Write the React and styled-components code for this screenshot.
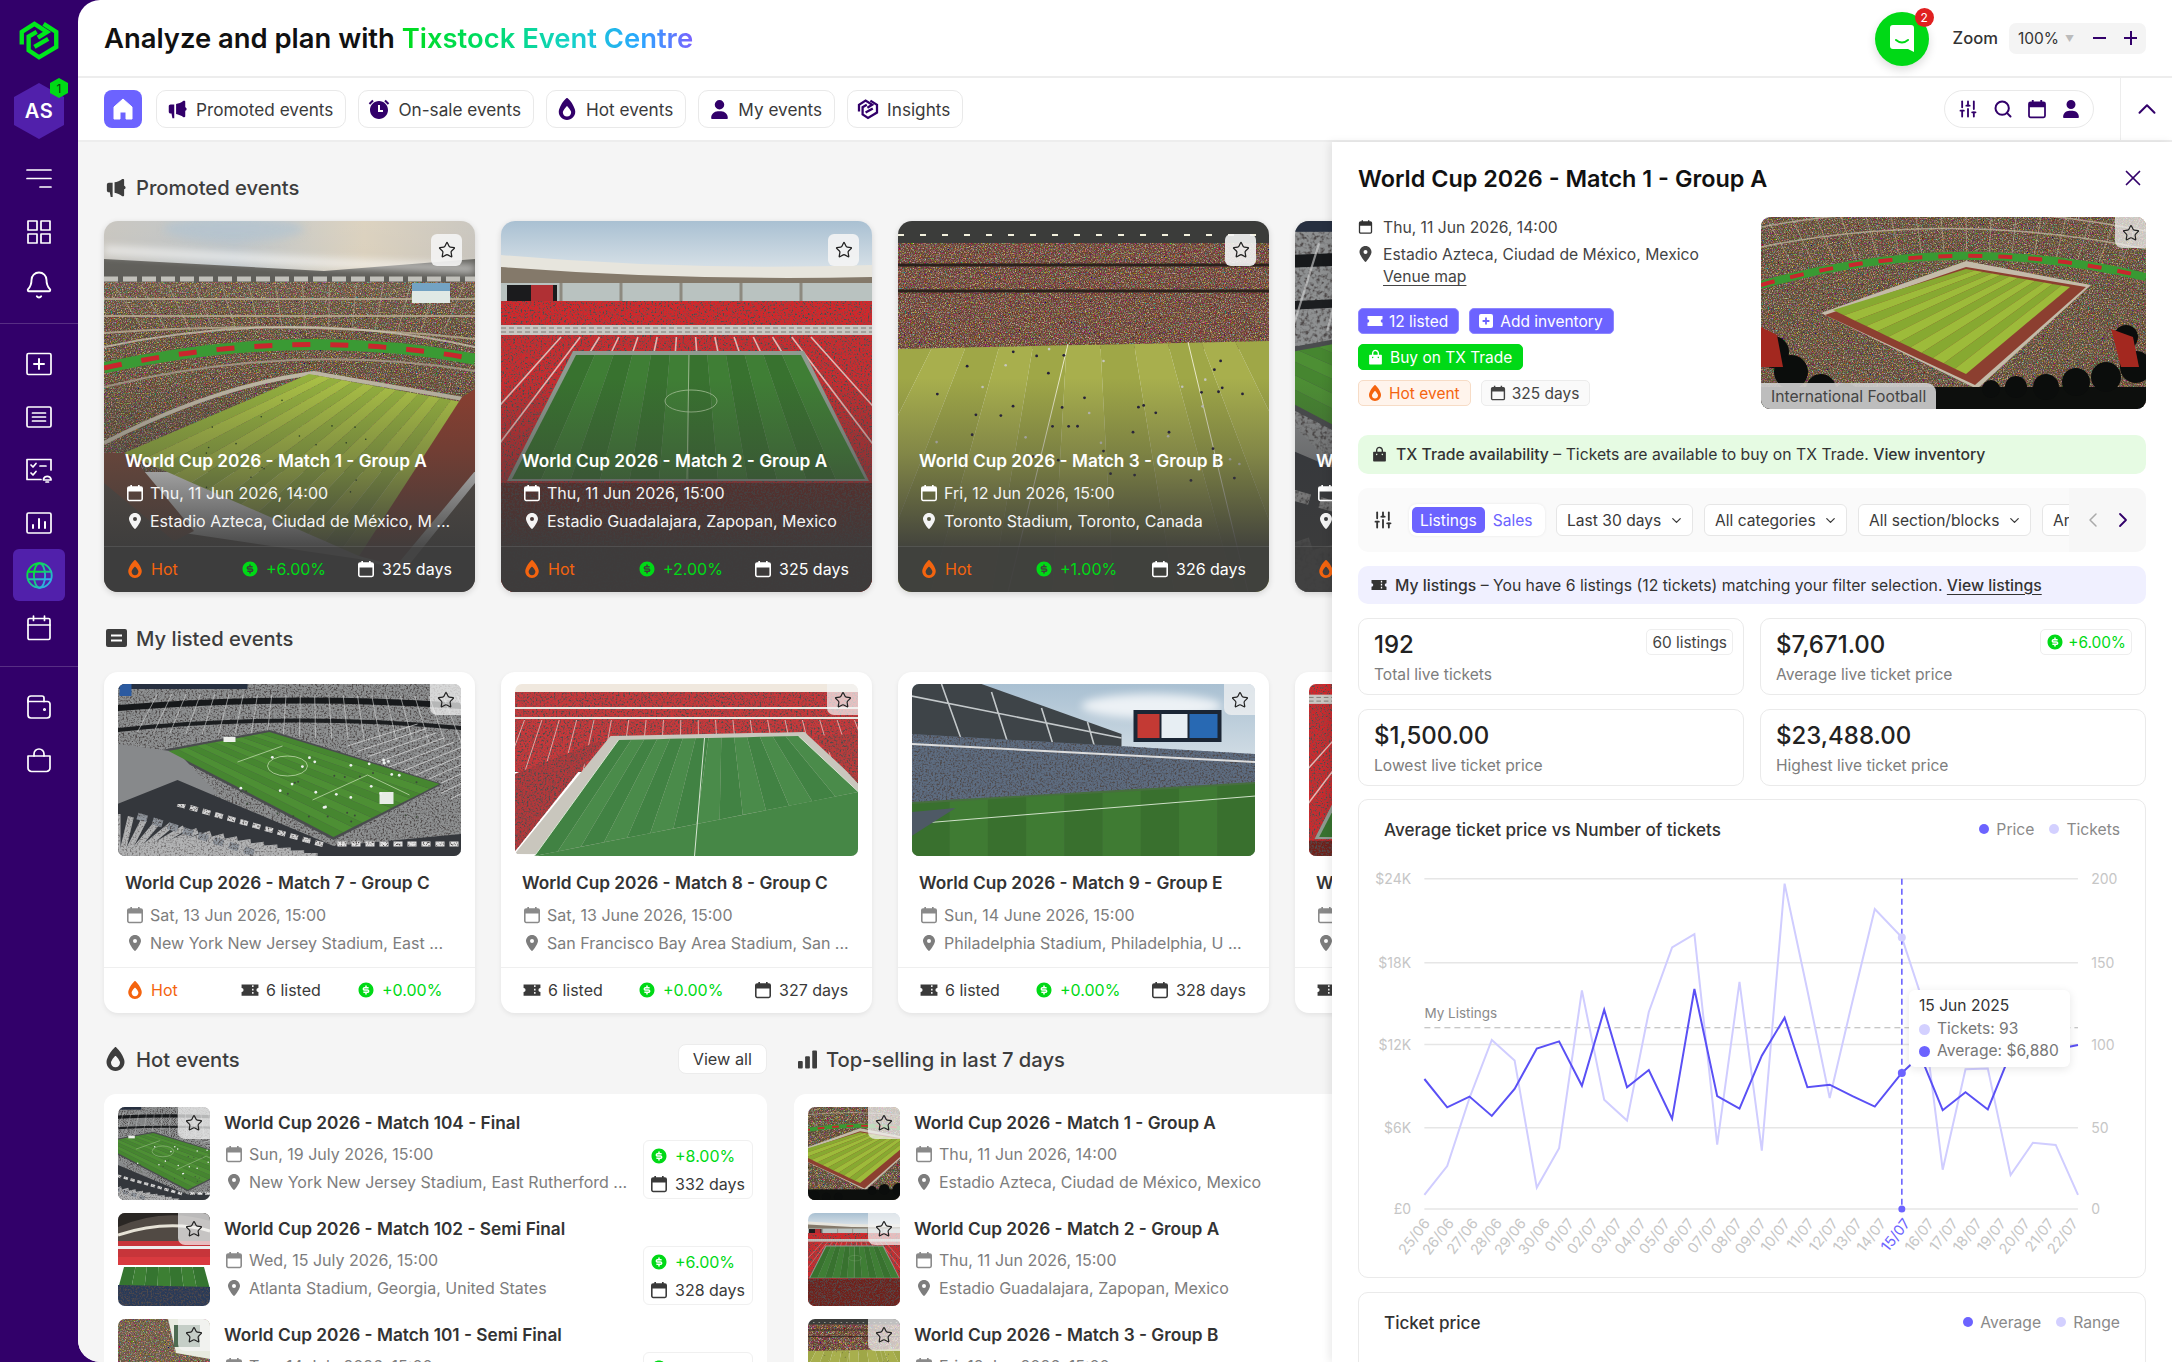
import React from "react";
import styled, { createGlobalStyle } from "styled-components";
import { Star, X, ChevronUp, ChevronDown, ChevronLeft, ChevronRight, Search, SlidersVertical, Bell } from "lucide-react";
import { FaFireFlameSimple, FaLocationDot, FaUser } from "react-icons/fa6";
import { RiMegaphoneFill, RiAlarmFill, RiMoneyDollarCircleFill, RiShoppingBagFill } from "react-icons/ri";

const GlobalStyle = createGlobalStyle`
  html, body { margin: 0; padding: 0; height: 100%; }
  body { font-family: "Inter", "Noto Sans", sans-serif; color: #333; overflow: hidden; }
  * { box-sizing: border-box; }
`;

const PURPLE = "#32006a";
const INDIGO = "#6c63ff";
const GREEN = "#00d916";
const ORANGE = "#f4640f";

/* ---------- little drawn icons ---------- */

const Logo = ({ size = 46, color = "#00e81c" }) => (
  <svg width={size} height={size} viewBox="0 0 40 40" fill="none" stroke={color} strokeWidth="3.8" strokeLinejoin="miter">
    <path d="M5 24V13L16 6l11 7-8 5" />
    <path d="M24 6l11 7v13L20 35l-9-6V17l7-4" />
    <path d="M16 26l12-7" />
  </svg>
);

const Cal = ({ size = 18, color = "currentColor" }) => (
  <svg width={size} height={size} viewBox="0 0 16 16" fill="none">
    <rect x="1.6" y="2.6" width="12.8" height="12" rx="1.2" stroke={color} strokeWidth="1.4" />
    <path d="M1.6 3.6a1 1 0 0 1 1-1h10.8a1 1 0 0 1 1 1v3H1.6z" fill={color} />
    <path d="M4.6 .8v2.6M11.4 .8v2.6" stroke={color} strokeWidth="1.5" />
  </svg>
);

const Ticket = ({ size = 18, color = "currentColor" }) => (
  <svg width={size} height={size} viewBox="0 0 16 16">
    <path d="M.5 3h15v3.2a1.8 1.8 0 0 0 0 3.6V13H.5V9.8a1.8 1.8 0 0 0 0-3.6z" fill={color} />
    <path d="M10.5 3.8v8.4" stroke="#fff" strokeWidth="1.3" strokeDasharray="1.6 1.4" />
  </svg>
);

const PlusSquare = ({ size = 16, color = "#fff", mark = INDIGO }) => (
  <svg width={size} height={size} viewBox="0 0 16 16">
    <rect x="1" y="1" width="14" height="14" rx="2" fill={color} />
    <path d="M8 4.6v6.8M4.6 8h6.8" stroke={mark} strokeWidth="1.8" />
  </svg>
);

const Flame = ({ size = 18, color = ORANGE }) => <FaFireFlameSimple size={size} color={color} />;
const Pin = ({ size = 16, color = "currentColor" }) => <FaLocationDot size={size} color={color} />;
const Dollar = ({ size = 18 }) => <RiMoneyDollarCircleFill size={size} color={GREEN} />;

const Line = ({ size = 26, children }) => (
  <svg width={size} height={size} viewBox="0 0 26 26" fill="none" stroke="#fff" strokeWidth="1.7" strokeLinecap="round" strokeLinejoin="round">
    {children}
  </svg>
);

const GlobeIcon = () => (
  <svg width="27" height="27" viewBox="0 0 26 26" fill="none" stroke="url(#globeGrad)" strokeWidth="1.8">
    <circle cx="13" cy="13" r="11.8" />
    <ellipse cx="13" cy="13" rx="5.4" ry="11.8" />
    <path d="M2 9.4h22M2 16.6h22" />
  </svg>
);

/* ---------- stadium pictures, drawn with svg ---------- */

const mix = (p, q, t) => [p[0] + (q[0] - p[0]) * t, p[1] + (q[1] - p[1]) * t];

const Pitch = ({ c, n = 12, a, b }) => {
  const [tl, tr, br, bl] = c;
  return (
    <g>
      {Array.from({ length: n }, (_, i) => {
        const p = [mix(tl, tr, i / n), mix(tl, tr, (i + 1) / n), mix(bl, br, (i + 1) / n), mix(bl, br, i / n)];
        return <polygon key={i} points={p.map((v) => v.join(",")).join(" ")} fill={i % 2 ? a : b} />;
      })}
    </g>
  );
};

const Dots = ({ x, y, w, h, n = 24, fill = "#26401d", r = 0.8, seed = 3 }) => {
  let s = seed * 97;
  const rnd = () => {
    s = (s * 9301 + 49297) % 233280;
    return s / 233280;
  };
  return (
    <g fill={fill}>
      {Array.from({ length: n }, (_, i) => (
        <circle key={i} cx={x + rnd() * w} cy={y + rnd() * h} r={r} />
      ))}
    </g>
  );
};

const Rays = ({ from, to, n, stroke = "#c9c4b6", width = 1, opacity = 0.7 }) => (
  <g stroke={stroke} strokeWidth={width} opacity={opacity}>
    {Array.from({ length: n }, (_, i) => {
      const t = i / (n - 1);
      const p = mix(from[0], from[1], t);
      const q = mix(to[0], to[1], t);
      return <line key={i} x1={p[0]} y1={p[1]} x2={q[0]} y2={q[1]} />;
    })}
  </g>
);

const Heads = ({ items }) => (
  <g fill="#0b0d0c">
    {items.map(([x, y, r], i) => (
      <circle key={i} cx={x} cy={y} r={r} />
    ))}
  </g>
);

const scenes = {
  azteca: {
    box: "0 0 371 371",
    art: (
      <>
        <rect width="371" height="60" fill="url(#skyWarm)" />
        <ellipse cx="130" cy="8" rx="70" ry="12" fill="#a8bccb" opacity=".7" filter="url(#soft)" />
        <path d="M0 38L220 50 371 38V70H0z" fill="#55544f" />
        <path d="M0 29L230 42 371 48" stroke="#fff" strokeWidth="7" opacity=".75" filter="url(#soft)" fill="none" />
        <path d="M0 58h371" stroke="#bdbcb6" strokeWidth="5" strokeDasharray="14 5" />
        <g filter="url(#crowdColor)">
          <rect y="61" width="371" height="190" fill="#5f4c39" />
        </g>
        <path d="M0 78h371M0 95h371M0 112Q190 98 371 118" stroke="#b5a88f" strokeWidth="2" fill="none" opacity=".85" />
        <path d="M0 126Q190 86 371 126" stroke="#cfc9b8" strokeWidth="2" fill="none" opacity=".7" />
        <Rays from={[[10, 64], [360, 64]]} to={[[40, 110], [340, 110]]} n={14} stroke="#bcb09a" opacity=".55" />
        <path d="M0 147Q190 105 371 138" stroke="#3a9a34" strokeWidth="11" fill="none" />
        <path d="M0 147Q190 105 371 138" stroke="#c9262d" strokeWidth="5" fill="none" strokeDasharray="18 20" />
        <path d="M0 166Q190 120 371 150" stroke="#a79e8e" strokeWidth="2" fill="none" opacity=".8" />
        <path d="M0 222Q110 165 210 152L371 180" stroke="#bdb6a4" strokeWidth="4" fill="none" />
        <polygon points="0,236 0,236 80,312 255,338 300,350 371,262 371,371 0,371" fill="#5b5048" />
        <polygon points="0,232 25,232 90,310 70,320 0,262" fill="#7b4a3a" />
        <Pitch c={[[205, 153], [358, 181], [255, 335], [20, 232]]} n={14} a="#a9bf45" b="#94b03e" />
        <Dots x={100} y={175} w={180} h={100} n={22} />
        <polygon points="358,176 371,168 371,250 292,345 255,335" fill="#8c3f30" />
        <rect x="308" y="62" width="38" height="20" fill="#dfe8e4" />
        <rect x="308" y="62" width="38" height="8" fill="#6c9ec0" />
        <rect x="0" y="0" width="371" height="371" fill="url(#haze)" />
      </>
    ),
  },
  aztecaWide: {
    box: "0 0 385 192",
    art: (
      <>
        <g filter="url(#crowdColor)">
          <rect width="385" height="192" fill="#5f4b38" />
        </g>
        <path d="M0 10Q190 -25 385 14M0 30Q190 -8 385 32" stroke="#c6bca6" strokeWidth="1.6" fill="none" opacity=".7" />
        <Rays from={[[5, 0], [380, 0]]} to={[[30, 45], [360, 45]]} n={16} stroke="#c6bca6" opacity=".5" />
        <path d="M0 68Q190 14 385 60" stroke="#399a33" strokeWidth="8" fill="none" />
        <path d="M0 68Q190 14 385 60" stroke="#c9262d" strokeWidth="4" fill="none" strokeDasharray="14 16" />
        <polygon points="60,96 205,44 330,68 216,172" fill="#c4bba9" />
        <polygon points="64,98 205,50 325,70 214,168" fill="#8c3f30" />
        <Pitch c={[[205, 52], [309, 70], [205, 157], [72, 93]]} n={12} a="#9dbb3a" b="#87a931" />
        <rect y="170" width="385" height="22" fill="#0d0f0d" />
        <Heads
          items={[
            [12, 135, 16], [30, 155, 17], [60, 172, 15], [85, 178, 12], [110, 184, 11], [135, 186, 9], [160, 186, 9],
            [230, 172, 9], [255, 170, 11], [285, 170, 13], [315, 165, 14], [345, 160, 15], [375, 150, 16], [365, 120, 12],
          ]}
        />
        <polygon points="0,110 16,118 22,150 0,150" fill="#a3281f" />
        <polygon points="350,112 372,120 378,150 360,150" fill="#a3281f" />
      </>
    ),
  },
  guadalajara: {
    box: "0 0 371 371",
    art: (
      <>
        <rect width="371" height="50" fill="url(#skyBlue)" />
        <path d="M0 34Q180 50 371 44V62H0z" fill="#e7e5dd" />
        <path d="M0 46Q180 60 371 56V72H0z" fill="#84796a" />
        <rect y="62" width="371" height="30" fill="#b9c2c0" />
        <rect x="6" y="64" width="50" height="18" fill="#1b1b1d" />
        <rect x="30" y="64" width="22" height="18" fill="#b03034" />
        <path d="M60 62v24M120 62v24M180 62v24M240 62v24M300 62v24" stroke="#8d8a80" strokeWidth="3" />
        <g filter="url(#crowd)">
          <rect y="80" width="371" height="26" fill="#d5252b" />
          <rect y="112" width="371" height="259" fill="#cc2a2e" />
        </g>
        <rect y="104" width="371" height="10" fill="#c9c8c3" />
        <path d="M0 107h371M0 111h371" stroke="#7e7b74" strokeWidth="1" strokeDasharray="5 3" />
        <Rays from={[[60, 116], [310, 116]]} to={[[-60, 250], [430, 250]]} n={14} stroke="#f0d8d2" width="1.6" opacity=".8" />
        <polygon points="72,130 303,130 368,260 6,260" fill="#8f9a90" />
        <Pitch c={[[75, 134], [300, 134], [364, 258], [11, 258]]} n={12} a="#3f7e35" b="#38722f" />
        <ellipse cx="190" cy="180" rx="26" ry="11" fill="none" stroke="#a9c69a" strokeWidth=".8" />
        <path d="M188 134L186 258M0 0" stroke="#a9c69a" strokeWidth=".8" />
        <g filter="url(#crowd)">
          <rect y="262" width="371" height="109" fill="#70201f" />
        </g>
      </>
    ),
  },
  toronto: {
    box: "0 0 371 371",
    art: (
      <>
        <rect width="371" height="24" fill="#3b3c3a" />
        <path d="M0 14h371" stroke="#f2f0dc" strokeWidth="2" strokeDasharray="6 16" />
        <g filter="url(#crowdColor)">
          <rect y="22" width="371" height="106" fill="#6a3f36" />
        </g>
        <path d="M0 44h371M0 70h371" stroke="#2a211c" strokeWidth="3" />
        <Pitch c={[[0, 128], [371, 120], [520, 371], [-150, 371]]} n={11} a="#a8af4d" b="#9fa747" />
        <path d="M170 123L110 371M290 121L350 371" stroke="#e9e8c8" strokeWidth="1" />
        <Dots x={30} y={130} w={320} h={130} n={34} fill="#241f3a" r={1.4} seed={11} />
        <Dots x={30} y={125} w={320} h={120} n={14} fill="#c7c7c0" r={1.3} seed={5} />
      </>
    ),
  },
  jersey: {
    box: "0 0 344 172",
    art: (
      <>
        <g filter="url(#crowd)">
          <rect width="344" height="172" fill="#8e9091" />
        </g>
        <rect width="130" height="5" fill="#273040" />
        <rect y="0" x="2" width="12" height="12" fill="#2b5aa0" />
        <path d="M0 24Q170 10 344 22" stroke="#17191b" strokeWidth="6" fill="none" />
        <path d="M0 46Q170 28 344 44" stroke="#1c1e20" strokeWidth="4" fill="none" />
        <Rays from={[[40, 10], [340, 12]]} to={[[20, 48], [360, 60]]} n={22} stroke="#d7d8d8" opacity=".6" />
        <Rays from={[[230, 62], [344, 120]]} to={[[300, 40], [400, 90]]} n={12} stroke="#e0e0e0" opacity=".7" />
        <polygon points="44,66 152,46 325,100 216,156" fill="#4a4c4e" />
        <polygon points="0,60 60,68 100,110 0,130" fill="#87898b" />
        <Pitch c={[[51, 67], [152, 48], [322, 100], [216, 153]]} n={11} a="#4d8f34" b="#468630" />
        <path d="M120 78l45-16M150 82a20 10 0 1 0 40 0a20 10 0 1 0 -40 0M195 116l55 -25 42 20" stroke="#bcd8a8" strokeWidth=".8" fill="none" />
        <rect x="262" y="108" width="14" height="12" fill="#e7ece6" />
        <rect x="106" y="53" width="12" height="5" fill="#eef1ec" />
        <Dots x={110} y={70} w={180} h={60} n={22} fill="#eef2f0" r={1.4} seed={6} />
        <Dots x={120} y={80} w={200} h={60} n={20} fill="#3c4a3a" r={1} seed={9} />
        <polygon points="0,120 60,96 216,162 344,150 344,172 0,172" fill="#34373c" />
        <g filter="url(#crowd)">
          <Rays from={[[0, 130], [200, 172]]} to={[[0, 172], [60, 172]]} n={16} stroke="#dcdddd" width="6" opacity=".75" />
          <path d="M220 160h124" stroke="#e5e5e5" strokeWidth="5" strokeDasharray="9 5" />
          <path d="M60 120l150 42" stroke="#d6d6d6" strokeWidth="5" strokeDasharray="8 5" />
          <path d="M20 132l120 38" stroke="#8e949c" strokeWidth="7" strokeDasharray="10 6" />
        </g>
      </>
    ),
  },
  sanfran: {
    box: "0 0 344 172",
    art: (
      <>
        <rect width="344" height="10" fill="#f0e8de" />
        <g filter="url(#crowd)">
          <rect y="8" width="344" height="80" fill="#c8393a" />
        </g>
        <path d="M0 24h344M0 34h344" stroke="#eae5de" strokeWidth="2" />
        <Rays from={[[10, 36], [340, 36]]} to={[[-10, 90], [360, 90]]} n={20} stroke="#eed9d2" opacity=".7" />
        <polygon points="0,170 96,52 290,48 344,98 344,172" fill="#c9c6bd" />
        <Pitch c={[[104, 56], [284, 52], [344, 108], [20, 172]]} n={14} a="#4a8b4a" b="#418243" />
        <polygon points="20,172 344,108 344,172" fill="#468746" />
        <path d="M190 54L180 172M104 56L20 172M284 52L344 108" stroke="#d7e6d2" strokeWidth="1" fill="none" />
        <g filter="url(#crowd)">
          <polygon points="0,90 90,55 0,168" fill="#b4373a" />
          <polygon points="300,52 344,50 344,100" fill="#b93a3b" />
        </g>
      </>
    ),
  },
  philly: {
    box: "0 0 344 172",
    art: (
      <>
        <rect width="344" height="90" fill="url(#skyBlue)" />
        <ellipse cx="240" cy="22" rx="70" ry="12" fill="#fff" opacity=".75" filter="url(#soft)" />
        <polygon points="0,0 70,0 210,50 210,72 0,62" fill="#3e4448" />
        <path d="M0 12L210 54M30 0l20 56M80 8l16 50M130 24l12 38M176 38l8 28" stroke="#c3c8ca" strokeWidth="1.6" />
        <g filter="url(#crowd)">
          <polygon points="0,50 344,70 344,112 0,130" fill="#5d6c80" />
        </g>
        <path d="M0 60L344 78" stroke="#ddd" strokeWidth="2" />
        <rect x="222" y="26" width="88" height="32" fill="#1b2635" />
        <rect x="226" y="30" width="22" height="24" fill="#c33a34" />
        <rect x="250" y="30" width="26" height="24" fill="#e7eef3" />
        <rect x="278" y="30" width="28" height="24" fill="#2869b3" />
        <polygon points="0,118 344,98 344,172 0,172" fill="#476f3e" />
        <Pitch c={[[0, 120], [344, 100], [344, 172], [0, 172]]} n={9} a="#3f7b33" b="#39702e" />
        <path d="M0 140L344 112" stroke="#cfe0c8" strokeWidth="1" />
        <polygon points="0,128 44,124 0,152" fill="#4e5965" />
      </>
    ),
  },
  atlanta: {
    box: "0 0 92 93",
    art: (
      <>
        <rect width="92" height="30" fill="#514a44" />
        <path d="M0 14Q46 -6 92 8V0H0z" fill="#2a2724" />
        <path d="M0 22Q50 6 92 18" stroke="#e6e2d6" strokeWidth="3" fill="none" />
        <rect y="28" width="92" height="16" fill="#c7353a" />
        <rect y="33" width="92" height="3" fill="#eee" />
        <rect y="44" width="92" height="8" fill="#d93a3f" />
        <Pitch c={[[6, 54], [86, 54], [92, 76], [0, 76]]} n={7} a="#3c7f33" b="#357530" />
        <g filter="url(#crowd)">
          <polygon points="0,72 92,74 92,93 0,93" fill="#293a58" />
        </g>
      </>
    ),
  },
  dallas: {
    box: "0 0 92 93",
    art: (
      <>
        <g filter="url(#crowdColor)">
          <rect width="92" height="60" fill="#6c5a44" />
        </g>
        <polygon points="50,0 92,0 92,40 58,34" fill="#e8ebe0" />
        <rect x="56" y="6" width="26" height="22" fill="#4e6b52" />
        <polygon points="0,60 92,46 92,93 0,93" fill="#3fa53f" />
      </>
    ),
  },
};

const PhotoSvg = styled.svg`
  display: block;
  width: 100%;
  height: 100%;
`;

const Photo = ({ scene }) => (
  <PhotoSvg viewBox={scenes[scene].box} preserveAspectRatio="xMidYMid slice">
    {scenes[scene].art}
  </PhotoSvg>
);

const Defs = styled.svg`
  position: absolute;
  width: 0;
  height: 0;
`;

const SharedDefs = () => (
  <Defs aria-hidden="true">
    <defs>
      <linearGradient id="globeGrad" x1="0" y1="0" x2="1" y2="1">
        <stop offset="0" stopColor="#00e81c" />
        <stop offset="1" stopColor="#34a8ff" />
      </linearGradient>
      <linearGradient id="skyWarm" x1="0" y1="0" x2="1" y2="0">
        <stop offset="0" stopColor="#c3c0b9" />
        <stop offset=".35" stopColor="#b9c0c4" />
        <stop offset=".7" stopColor="#d8cdb8" />
        <stop offset="1" stopColor="#c4c0b8" />
      </linearGradient>
      <linearGradient id="skyBlue" x1="0" y1="0" x2="0" y2="1">
        <stop offset="0" stopColor="#a9c0d2" />
        <stop offset="1" stopColor="#d9e2e8" />
      </linearGradient>
      <linearGradient id="haze" x1="0" y1="0" x2="0" y2="1">
        <stop offset="0" stopColor="#fff" stopOpacity=".12" />
        <stop offset=".3" stopColor="#fff" stopOpacity="0" />
      </linearGradient>
      <filter id="soft" x="-20%" y="-100%" width="140%" height="300%">
        <feGaussianBlur stdDeviation="4" />
      </filter>
      <filter id="crowd" x="0" y="0" width="100%" height="100%">
        <feTurbulence type="fractalNoise" baseFrequency=".55" numOctaves="2" seed="4" result="n" />
        <feColorMatrix in="n" type="matrix" values="0 0 0 0 .08  0 0 0 0 .07  0 0 0 0 .07  0 0 0 3.4 -1.5" result="d" />
        <feComposite in="d" in2="SourceAlpha" operator="in" result="e" />
        <feMerge>
          <feMergeNode in="SourceGraphic" />
          <feMergeNode in="e" />
        </feMerge>
      </filter>
      <filter id="crowdColor" x="0" y="0" width="100%" height="100%">
        <feTurbulence type="fractalNoise" baseFrequency=".8" numOctaves="2" seed="8" result="n" />
        <feColorMatrix in="n" type="matrix" values="1.5 0 0 0 -.42  0 1.2 0 0 -.36  0 0 .9 0 -.28  0 0 0 3 -1.2" result="d" />
        <feComposite in="d" in2="SourceAlpha" operator="in" result="e" />
        <feMerge>
          <feMergeNode in="SourceGraphic" />
          <feMergeNode in="e" />
        </feMerge>
      </filter>
    </defs>
  </Defs>
);

/* ---------- shell ---------- */

const Shell = styled.div`
  display: flex;
  width: 100%;
  height: 100vh;
  background: ${PURPLE};
  overflow: hidden;
`;

const Sidebar = styled.aside`
  width: 78px;
  flex: none;
  display: flex;
  flex-direction: column;
  align-items: center;
  padding-top: 17px;
`;

const Avatar = styled.div`
  position: relative;
  width: 52px;
  height: 58px;
  margin: 19px 0 12px;
  display: flex;
  align-items: center;
  justify-content: center;
  & > svg {
    position: absolute;
    inset: 0;
  }
`;

const AvatarText = styled.span`
  position: relative;
  color: #fff;
  font-size: 20px;
  font-weight: 600;
  letter-spacing: 0.5px;
`;

const AvatarBadge = styled.span`
  position: absolute;
  top: -4px;
  right: -3px;
  width: 18px;
  height: 20px;
  display: flex;
  align-items: center;
  justify-content: center;
  font-size: 12px;
  color: #133a10;
  background: ${GREEN};
  clip-path: polygon(50% 0, 100% 25%, 100% 75%, 50% 100%, 0 75%, 0 25%);
`;

const SideItem = styled.div`
  width: 52px;
  height: ${(p) => (p.$active ? "52px" : "53px")};
  flex: none;
  display: flex;
  align-items: center;
  justify-content: center;
  border-radius: 6px;
  background: ${(p) => (p.$active ? "#5120ab" : "transparent")};
`;

const SideRule = styled.div`
  width: 100%;
  height: 1px;
  flex: none;
  margin: 12px 0 13px;
  background: rgba(255, 255, 255, 0.18);
`;

const Main = styled.main`
  flex: 1;
  min-width: 0;
  display: flex;
  flex-direction: column;
  background: #fff;
  border-radius: 22px 0 0 22px;
  overflow: hidden;
`;

const Header = styled.header`
  height: 78px;
  flex: none;
  display: flex;
  align-items: center;
  padding: 0 26px;
  border-bottom: 2px solid #ededed;
`;

const Title = styled.h1`
  flex: 1;
  margin: 0;
  font-size: 27.4px;
  font-weight: 600;
  color: #111;
`;

const Gradient = styled.span`
  background: linear-gradient(90deg, #00dc1a 0%, #00dc6a 30%, #14d2c8 58%, #2aa6ff 82%, #7a62ff 100%);
  -webkit-background-clip: text;
  background-clip: text;
  color: transparent;
`;

const ChatBubble = styled.div`
  position: relative;
  width: 54px;
  height: 54px;
  flex: none;
  margin-right: 24px;
  margin-top: 1px;
  display: flex;
  align-items: center;
  justify-content: center;
  border-radius: 50%;
  background: ${GREEN};
  box-shadow: 0 4px 10px rgba(0, 0, 0, 0.14);
`;

const ChatBadge = styled.span`
  position: absolute;
  top: -4px;
  right: -5px;
  width: 19px;
  height: 19px;
  display: flex;
  align-items: center;
  justify-content: center;
  border-radius: 50%;
  color: #fff;
  font-size: 12px;
  background: #e02020;
`;

const ZoomLabel = styled.span`
  font-size: 16.6px;
  font-weight: 500;
  color: #333;
  margin-right: 11px;
`;

const ZoomBox = styled.div`
  width: 137px;
  height: 31px;
  display: flex;
  align-items: center;
  padding: 0 9px;
  border-radius: 7px;
  background: #f4f4f4;
  font-size: 15.5px;
  color: #333;
`;

const ZoomCaret = styled.span`
  font-size: 9px;
  color: #bbb;
  margin: 0 19px 0 6px;
`;

const ZoomSign = styled.span`
  width: 14px;
  height: 2px;
  margin-right: 18px;
  position: relative;
  background: ${PURPLE};
  &:last-child {
    margin: 0;
  }
  &[data-plus]::after {
    content: "";
    position: absolute;
    left: 6px;
    top: -6px;
    width: 2px;
    height: 14px;
    background: ${PURPLE};
  }
`;

const Nav = styled.nav`
  height: 64px;
  flex: none;
  display: flex;
  align-items: stretch;
  padding-left: 26px;
  border-bottom: 2px solid #ededed;
`;

const NavChips = styled.div`
  flex: 1;
  display: flex;
  align-items: center;
  gap: 12px;
`;

const HomeButton = styled.div`
  width: 38px;
  height: 38px;
  margin-right: 2px;
  display: flex;
  align-items: center;
  justify-content: center;
  border-radius: 8px;
  background: ${INDIGO};
`;

const NavChip = styled.div`
  height: 38px;
  display: flex;
  align-items: center;
  gap: 7px;
  padding: 0 12px 0 8px;
  border: 1.5px solid #e9e9e9;
  border-radius: 10px;
  font-size: 17.2px;
  color: #3a3a3a;
`;

const ChipIcon = styled.span`
  width: 24px;
  display: flex;
  justify-content: center;
  color: ${PURPLE};
`;

const ToolPill = styled.div`
  width: 150px;
  height: 38px;
  margin: 12px 26px 0 0;
  display: flex;
  align-items: center;
  justify-content: space-around;
  padding: 0 6px;
  border: 1.5px solid #e9e9e9;
  border-radius: 19px;
  color: ${PURPLE};
`;

const Collapse = styled.div`
  width: 52px;
  display: flex;
  align-items: center;
  justify-content: center;
  border-left: 1.5px solid #ededed;
  color: ${PURPLE};
`;

const Body = styled.div`
  flex: 1;
  min-height: 0;
  display: flex;
`;

/* ---------- left content ---------- */

const Content = styled.section`
  flex: 1;
  min-width: 0;
  padding: 32px 0 0 26px;
  background: #f5f5f5;
  overflow: hidden;
`;

const Heading = styled.h2`
  flex: 1;
  height: 26px;
  margin: 0;
  display: flex;
  align-items: center;
  gap: 9px;
  font-size: 20.2px;
  font-weight: 500;
  color: #3d3d3d;
`;

const HeadIcon = styled.span`
  width: 23px;
  display: flex;
  justify-content: flex-end;
  color: #3d3d3d;
`;

const CardRow = styled.div`
  display: flex;
  gap: 26px;
  margin: 21px 0 33px;
  width: 1500px;
`;

const Promo = styled.article`
  position: relative;
  width: 371px;
  height: 371px;
  flex: none;
  display: flex;
  flex-direction: column;
  justify-content: flex-end;
  border-radius: 14px;
  overflow: hidden;
  color: #fff;
  box-shadow: 0 2px 6px rgba(0, 0, 0, 0.14);
`;

const PromoPhoto = styled.div`
  position: absolute;
  inset: 0;
`;

const StarBox = styled.span`
  position: absolute;
  z-index: 2;
  top: ${(p) => (p.$flush ? "0" : "13px")};
  right: ${(p) => (p.$flush ? "0" : "13px")};
  width: ${(p) => (p.$size ? p.$size : 31)}px;
  height: ${(p) => (p.$size ? p.$size : 32)}px;
  display: flex;
  align-items: center;
  justify-content: center;
  color: #222;
  background: rgba(244, 244, 244, ${(p) => (p.$flush ? 0.72 : 0.9)});
  border-radius: ${(p) => (p.$flush ? "0 0 0 7px" : "6px")};
`;

const PromoInfo = styled.div`
  position: relative;
  padding: 70px 21px 11px;
  background: linear-gradient(180deg, rgba(60, 60, 60, 0) 0%, rgba(60, 60, 60, 0.35) 45%, rgba(60, 60, 60, 0.92) 100%);
`;

const CardTitle = styled.div`
  font-size: 17.25px;
  font-weight: 600;
  line-height: 26px;
  margin-bottom: 5px;
  white-space: nowrap;
  color: ${(p) => (p.$light ? "#fff" : "#333")};
`;

const MetaLine = styled.div`
  height: 28px;
  display: flex;
  align-items: center;
  gap: 6px;
  font-size: 16px;
  white-space: nowrap;
  color: ${(p) => (p.$light ? "#f4f4f4" : "#7d7d7d")};
  & > svg {
    width: 18px;
    flex: none;
    margin-left: 1px;
    color: ${(p) => (p.$light ? "#fff" : "#8a8a8a")};
  }
`;

const PromoBar = styled.div`
  position: relative;
  height: 46px;
  display: grid;
  grid-template-columns: 115px 116px 1fr;
  align-items: center;
  padding: 0 0 2px 22px;
  font-size: 16px;
  background: rgba(60, 60, 60, 0.96);
  border-top: 1px solid rgba(255, 255, 255, 0.1);
`;

const Metric = styled.span`
  display: flex;
  align-items: center;
  gap: 7px;
  white-space: nowrap;
  color: ${(p) => (p.$tone === "hot" ? ORANGE : p.$tone === "up" ? GREEN : "inherit")};
  & > svg {
    flex: none;
  }
`;

const Listed = styled.article`
  position: relative;
  width: 371px;
  flex: none;
  background: #fff;
  border-radius: 14px;
  box-shadow: 0 2px 5px rgba(0, 0, 0, 0.07);
  overflow: hidden;
`;

const ListedPhoto = styled.div`
  position: relative;
  height: 172px;
  margin: 12px 14px 14px;
  border-radius: 7px;
  overflow: hidden;
`;

const ListedInfo = styled.div`
  padding: 0 21px 10px;
`;

const ListedBar = styled.div`
  height: 46px;
  display: grid;
  grid-template-columns: 115px 116px 1fr;
  align-items: center;
  padding: 0 0 1px 22px;
  font-size: 16px;
  color: #3a3a3a;
  border-top: 1px solid #efefef;
`;

const Columns = styled.div`
  display: flex;
  width: 1400px;
  gap: 27px;
  margin-top: -2px;
`;

const HotColumn = styled.div`
  width: 663px;
  flex: none;
`;

const TopColumn = styled.div`
  flex: 1;
  min-width: 0;
`;

const ColumnHead = styled.div`
  height: 30px;
  display: flex;
  align-items: center;
  margin-bottom: 20px;
`;

const ViewAll = styled.span`
  height: 30px;
  padding: 0 14px;
  display: flex;
  align-items: center;
  border: 1.5px solid #ececec;
  border-radius: 8px;
  background: #fff;
  font-size: 16.3px;
  color: #3a3a3a;
`;

const ListCard = styled.div`
  display: flex;
  flex-direction: column;
  gap: 13px;
  padding: 13px 14px;
  border-radius: 12px;
  background: #fff;
`;

const Row = styled.div`
  display: flex;
  gap: 14px;
`;

const Thumb = styled.div`
  position: relative;
  width: 92px;
  height: 93px;
  flex: none;
  border-radius: 7px;
  overflow: hidden;
`;

const RowInfo = styled.div`
  flex: 1;
  min-width: 0;
  padding-top: 3px;
  & > ${CardTitle} {
    margin-bottom: 4px;
    color: #333;
  }
`;

const RowLower = styled.div`
  display: flex;
  justify-content: space-between;
`;

const StatBox = styled.div`
  width: 110px;
  height: 59px;
  padding: 0 6px;
  display: flex;
  flex-direction: column;
  justify-content: center;
  font-size: 16px;
  color: #3a3a3a;
  border: 1.5px solid #f0f0f0;
  border-radius: 6px;
  & > span {
    height: 28px;
  }
`;

/* ---------- right panel ---------- */

const Panel = styled.aside`
  position: relative;
  width: 840px;
  flex: none;
  padding: 22px 26px 0;
  background: #fff;
  box-shadow: -3px 0 8px rgba(0, 0, 0, 0.08);
  overflow: hidden;
`;

const PanelHead = styled.div`
  height: 28px;
  display: flex;
  align-items: center;
  justify-content: space-between;
  margin-bottom: 25px;
  color: ${PURPLE};
`;

const PanelTitle = styled.h2`
  margin: 0;
  font-size: 23.4px;
  font-weight: 600;
  color: #111;
`;

const PanelTop = styled.div`
  display: flex;
  justify-content: space-between;
  margin-bottom: 26px;
`;

const PanelFacts = styled.div`
  display: flex;
  flex-direction: column;
`;

const FactLine = styled.div`
  height: 20px;
  display: flex;
  align-items: center;
  gap: 10px;
  margin-bottom: 7px;
  font-size: 15.7px;
  color: #444;
  & > svg {
    width: 15px;
    flex: none;
    color: #333;
  }
`;

const VenueLink = styled.a`
  height: 20px;
  margin: -4px 0 21px 25px;
  font-size: 15.7px;
  color: #444;
  text-decoration: underline;
  text-underline-offset: 3px;
`;

const TagRow = styled.div`
  display: flex;
  gap: 10px;
  margin-bottom: 10px;
  &:last-child {
    margin-bottom: 0;
  }
`;

const Tag = styled.span`
  height: 26px;
  padding: 0 10px 0 8px;
  display: flex;
  align-items: center;
  gap: 6px;
  border-radius: 5px;
  font-size: 15.5px;
  white-space: nowrap;
  color: ${(p) => (p.$kind === "hot" ? ORANGE : p.$kind === "plain" ? "#444" : "#fff")};
  background: ${(p) =>
    p.$kind === "hot" ? "#fff4ec" : p.$kind === "plain" ? "#fafafa" : p.$kind === "buy" ? GREEN : INDIGO};
  border: 1px solid
    ${(p) => (p.$kind === "hot" ? "#f7dcc6" : p.$kind === "plain" ? "#ececec" : p.$kind === "buy" ? GREEN : "#8d86ff")};
`;

const PanelPhoto = styled.div`
  position: relative;
  width: 385px;
  height: 192px;
  flex: none;
  border-radius: 9px;
  overflow: hidden;
`;

const PhotoLabel = styled.span`
  position: absolute;
  left: 0;
  bottom: 0;
  height: 26px;
  padding: 0 10px;
  display: flex;
  align-items: center;
  font-size: 15.7px;
  color: #444;
  background: rgba(208, 208, 208, 0.9);
  border-radius: 0 9px 0 0;
`;

const Alert = styled.div`
  height: ${(p) => (p.$tone === "green" ? 39 : 38)}px;
  display: flex;
  align-items: center;
  gap: 8px;
  padding-left: 13px;
  margin-bottom: 14px;
  border-radius: 10px;
  font-size: 15.75px;
  color: #333;
  background: ${(p) => (p.$tone === "green" ? "#e6fbe3" : "#f0f0ff")};
  & b {
    font-weight: 500;
  }
  & a {
    font-weight: 500;
    text-decoration: underline;
    text-underline-offset: 3px;
  }
  & > svg {
    flex: none;
    color: #333;
  }
`;

const FilterBar = styled.div`
  position: relative;
  height: 64px;
  display: flex;
  align-items: center;
  gap: 11px;
  padding-left: 15px;
  margin-bottom: 14px;
  border-radius: 10px;
  background: #fafafa;
  overflow: hidden;
  color: #333;
  & > svg {
    flex: none;
  }
`;

const Toggle = styled.div`
  width: 136px;
  height: 32px;
  flex: none;
  display: flex;
  align-items: center;
  margin-left: 5px;
  padding: 3px;
  border-radius: 8px;
  background: #fff;
  box-shadow: 0 0 3px rgba(0, 0, 0, 0.08);
  font-size: 15.6px;
`;

const ToggleOn = styled.span`
  height: 26px;
  padding: 0 8px;
  display: flex;
  align-items: center;
  border-radius: 5px;
  color: #fff;
  background: ${INDIGO};
`;

const ToggleOff = styled.span`
  padding: 0 8px;
  color: ${INDIGO};
`;

const Select = styled.div`
  width: ${(p) => p.$w}px;
  height: 32px;
  flex: none;
  display: flex;
  align-items: center;
  justify-content: space-between;
  padding: 0 8px 0 10px;
  border: 1.5px solid #e6e6e6;
  border-radius: 6px;
  background: #fff;
  font-size: 15.6px;
  color: #3a3a3a;
  white-space: nowrap;
`;

const Arrows = styled.div`
  position: absolute;
  top: 0;
  right: 0;
  bottom: 0;
  width: 77px;
  display: flex;
  align-items: center;
  justify-content: center;
  gap: 6px;
  background: #f7f7f7;
  color: ${PURPLE};
  & > svg:first-child {
    color: #aaa;
  }
`;

const StatGrid = styled.div`
  display: grid;
  grid-template-columns: 386px 386px;
  justify-content: space-between;
  gap: 14px 15px;
  margin-bottom: 13px;
`;

const StatCard = styled.div`
  position: relative;
  height: 77px;
  padding: 11px 15px 0;
  border: 1.5px solid #eaeaea;
  border-radius: 10px;
`;

const StatValue = styled.div`
  font-size: 24px;
  font-weight: 500;
  line-height: 30px;
  color: #222;
`;

const StatLabel = styled.div`
  font-size: 15.6px;
  line-height: 20px;
  margin-top: 5px;
  color: #7d7d7d;
`;

const StatChip = styled.span`
  position: absolute;
  top: 10px;
  right: ${(p) => (p.$up ? "13px" : "10px")};
  height: 26px;
  padding: 0 5px;
  display: flex;
  align-items: center;
  gap: 4px;
  font-size: 15.4px;
  color: ${(p) => (p.$up ? GREEN : "#444")};
  border: 1.5px solid #eeeeee;
  border-radius: 5px;
`;

const ChartCard = styled.div`
  position: relative;
  height: ${(p) => p.$h}px;
  margin-bottom: 14px;
  border: 1.5px solid #eaeaea;
  border-radius: 10px;
`;

const ChartHead = styled.div`
  height: 63px;
  display: flex;
  align-items: center;
  justify-content: space-between;
  padding: 0 25px 5px;
`;

const ChartTitle = styled.div`
  font-size: 17.1px;
  font-weight: 500;
  color: #333;
`;

const Legend = styled.div`
  display: flex;
  gap: 15px;
  font-size: 15.7px;
  color: #8a8a8a;
`;

const LegendItem = styled.span`
  display: flex;
  align-items: center;
  gap: 7px;
  &::before {
    content: "";
    width: 10px;
    height: 10px;
    border-radius: 50%;
    background: ${(p) => (p.$soft ? "#d3d0ff" : INDIGO)};
  }
`;

const ChartSvg = styled.svg`
  display: block;
  font-family: "Inter", sans-serif;
  & text {
    font-size: 14px;
    fill: #c6c6c6;
  }
`;

const ChartNote = styled.text`
  && {
    fill: #8a8a8a;
    font-size: 13.5px;
  }
`;

const AxisLabel = styled.text`
  && {
    fill: ${(p) => (p.$on ? INDIGO : "#c6c6c6")};
    font-size: 14.5px;
  }
`;

const Tooltip = styled.div`
  position: absolute;
  left: 550px;
  top: 190px;
  width: 161px;
  height: 77px;
  padding: 5px 10px;
  background: #fff;
  border-radius: 6px;
  box-shadow: 0 2px 10px rgba(0, 0, 0, 0.1);
  font-size: 15.6px;
  line-height: 22px;
  color: #777;
`;

const TipTitle = styled.div`
  color: #333;
  margin-bottom: 1px;
`;

const TipRow = styled.div`
  display: flex;
  align-items: center;
  gap: 7px;
  &::before {
    content: "";
    width: 11px;
    height: 11px;
    border-radius: 50%;
    background: ${(p) => (p.$soft ? "#d3d0ff" : INDIGO)};
  }
`;

/* ---------- data ---------- */

const promoted = [
  { scene: "azteca", title: "World Cup 2026 - Match 1 - Group A", date: "Thu, 11 Jun 2026, 14:00", place: "Estadio Azteca, Ciudad de México, M ...", pct: "+6.00%", days: "325 days" },
  { scene: "guadalajara", title: "World Cup 2026 - Match 2 - Group A", date: "Thu, 11 Jun 2026, 15:00", place: "Estadio Guadalajara, Zapopan, Mexico", pct: "+2.00%", days: "325 days" },
  { scene: "toronto", title: "World Cup 2026 - Match 3 - Group B", date: "Fri, 12 Jun 2026, 15:00", place: "Toronto Stadium, Toronto, Canada", pct: "+1.00%", days: "326 days" },
  { scene: "jersey", title: "World Cup 2026 - Match 4 - Group B", date: "Fri, 12 Jun 2026, 18:00", place: "Los Angeles Stadium, Inglewood", pct: "+1.00%", days: "326 days" },
];

const listed = [
  { scene: "jersey", title: "World Cup 2026 - Match 7 - Group C", date: "Sat, 13 Jun 2026, 15:00", place: "New York New Jersey Stadium, East ...", first: "hot", days: "" },
  { scene: "sanfran", title: "World Cup 2026 - Match 8 - Group C", date: "Sat, 13 June 2026, 15:00", place: "San Francisco Bay Area Stadium, San ...", days: "327 days" },
  { scene: "philly", title: "World Cup 2026 - Match 9 - Group E", date: "Sun, 14 June 2026, 15:00", place: "Philadelphia Stadium, Philadelphia, U ...", days: "328 days" },
  { scene: "guadalajara", title: "World Cup 2026 - Match 7 - Group C", date: "Sun, 14 June 2026, 18:00", place: "Houston Stadium, Houston, Texas", days: "328 days" },
];

const hot = [
  { scene: "jersey", title: "World Cup 2026 - Match 104 - Final", date: "Sun, 19 July 2026, 15:00", place: "New York New Jersey Stadium, East Rutherford ...", pct: "+8.00%", days: "332 days" },
  { scene: "atlanta", title: "World Cup 2026 - Match 102 - Semi Final", date: "Wed, 15 July 2026, 15:00", place: "Atlanta Stadium, Georgia, United States", pct: "+6.00%", days: "328 days" },
  { scene: "dallas", title: "World Cup 2026 - Match 101 - Semi Final", date: "Tue, 14 July 2026, 15:00", place: "Dallas Stadium, Arlington, United States", pct: "+0.00%", days: "327 days" },
];

const top = [
  { scene: "aztecaWide", title: "World Cup 2026 - Match 1 - Group A", date: "Thu, 11 Jun 2026, 14:00", place: "Estadio Azteca, Ciudad de México, Mexico" },
  { scene: "guadalajara", title: "World Cup 2026 - Match 2 - Group A", date: "Thu, 11 Jun 2026, 15:00", place: "Estadio Guadalajara, Zapopan, Mexico" },
  { scene: "toronto", title: "World Cup 2026 - Match 3 - Group B", date: "Fri, 12 Jun 2026, 15:00", place: "Toronto Stadium, Toronto, Canada" },
];

const labels = ["25/06", "26/06", "27/06", "28/06", "29/06", "30/06", "01/07", "02/07", "03/07", "04/07", "05/07", "06/07", "07/07", "08/07", "09/07", "10/07", "11/07", "12/07", "13/07", "14/07", "15/07", "16/07", "17/07", "18/07", "19/07", "20/07", "21/07", "22/07"];

// traced from the picture, in crop units (x / 1.885, y / 2.79)
const priceLine = [[160,777],[203,856],[245,826],[287,880],[330,805],[372,692],[414,672],[457,796],[499,584],[542,800],[583,752],[627,888],[669,526],[712,825],[754,860],[796,712],[839,606],[882,800],[924,793],[967,825],[1009,854],[1060,760],[1095,712],[1137,864],[1180,814],[1222,862],[1265,705],[1307,700],[1350,695],[1392,682]];
const ticketLine = [[160,1100],[203,1020],[245,830],[287,668],[330,725],[372,1080],[414,970],[457,530],[499,835],[542,893],[583,590],[627,410],[669,373],[712,960],[754,506],[796,977],[839,232],[882,530],[924,830],[967,560],[1009,303],[1060,382],[1095,540],[1137,1030],[1180,750],[1222,748],[1265,1045],[1307,955],[1350,961],[1392,1100]];

const px = (x) => 1340 + x / 1.885 - 1359.5;
const py = (y) => 800 + y / 2.79 - 862.5;
const toPoints = (line) => line.map(([x, y]) => `${px(x).toFixed(1)},${py(y).toFixed(1)}`).join(" ");

const gridRows = [
  { y: 218, left: "$24K", right: "200" },
  { y: 453, left: "$18K", right: "150" },
  { y: 681, left: "$12K", right: "100" },
  { y: 913, left: "$6K", right: "50" },
  { y: 1140, left: "£0", right: "0" },
];

const PriceChart = () => (
  <ChartSvg width="785" height="400" viewBox="0 0 785 400">
    {gridRows.map((r) => (
      <g key={r.right}>
        <line x1={px(160)} x2={px(1392)} y1={py(r.y)} y2={py(r.y)} stroke="#e6e6e6" strokeWidth="1.5" />
        <text x={px(135)} y={py(r.y) + 5} textAnchor="end">{r.left}</text>
        <text x={px(1417)} y={py(r.y) + 5}>{r.right}</text>
      </g>
    ))}
    <line x1={px(160)} x2={px(1392)} y1={py(634)} y2={py(634)} stroke="#b5b5b5" strokeWidth="1.2" strokeDasharray="6 4" />
    <ChartNote x={px(160)} y={py(593) + 5}>My Listings</ChartNote>
    <polyline points={toPoints(ticketLine)} fill="none" stroke="#d0cdff" strokeWidth="2" />
    <polyline points={toPoints(priceLine)} fill="none" stroke="#5a50f5" strokeWidth="2" />
    <line x1={px(1060)} x2={px(1060)} y1={py(218)} y2={py(1140)} stroke={INDIGO} strokeWidth="1.6" strokeDasharray="6 4" />
    <circle cx={px(1060)} cy={py(382)} r="4" fill="#d3d0ff" />
    <circle cx={px(1060)} cy={py(760)} r="4" fill={INDIGO} />
    <circle cx={px(1060)} cy={py(1140)} r="3.5" fill={INDIGO} />
    {labels.map((label, i) => {
      const x = px(172 + 45.25 * i);
      const y = py(1180);
      return (
        <AxisLabel key={label} x={x} y={y} textAnchor="end" transform={`rotate(-52 ${x} ${y})`} $on={i === 20}>
          {label}
        </AxisLabel>
      );
    })}
  </ChartSvg>
);

const App = () => (
  <>
    <GlobalStyle />
    <SharedDefs />
    <Shell>
      <Sidebar>
        <Logo />
        <Avatar>
          <svg width="52" height="58" viewBox="0 0 52 58">
            <path d="M26 1l25 14v28L26 57 1 43V15z" fill="#5120ab" />
          </svg>
          <AvatarText>AS</AvatarText>
          <AvatarBadge>1</AvatarBadge>
        </Avatar>
        <SideItem>
          <Line>
            <path d="M1 4h24M1 12.5h24M14 21h11" />
          </Line>
        </SideItem>
        <SideItem>
          <Line>
            <rect x="2" y="2" width="9" height="9" />
            <rect x="15" y="2" width="9" height="9" />
            <rect x="2" y="15" width="9" height="9" />
            <rect x="15" y="15" width="9" height="9" />
          </Line>
        </SideItem>
        <SideItem>
          <Bell size={30} color="#fff" strokeWidth={1.5} />
        </SideItem>
        <SideRule />
        <SideItem>
          <Line>
            <rect x="1" y="2.5" width="24" height="21" rx="1.5" />
            <path d="M13 8v10M8 13h10" strokeWidth="2" />
          </Line>
        </SideItem>
        <SideItem>
          <Line>
            <rect x="1" y="3" width="24" height="20" rx="1.5" />
            <path d="M6.5 9h13M6.5 13h13M6.5 17h13" />
          </Line>
        </SideItem>
        <SideItem>
          <Line>
            <path d="M25 13V2.5H1V22.5h14" />
            <path d="M5 8l2 2 3-3.5M5 16l2 2 3-3.5M14 9h6" />
            <path d="M17.5 22a4 4 0 0 1 7.5 0v1h-7.5zM20 25h2.5" />
          </Line>
        </SideItem>
        <SideItem>
          <Line>
            <rect x="1" y="3" width="24" height="20" rx="1.5" />
            <path d="M7 18v-3M13 18V9M19 18v-6" strokeWidth="2" />
          </Line>
        </SideItem>
        <SideItem $active>
          <GlobeIcon />
        </SideItem>
        <SideItem>
          <Line>
            <rect x="2" y="3.5" width="22" height="21" rx="1.5" />
            <path d="M2 10h22M7.5 1v4.5M18.5 1v4.5" />
          </Line>
        </SideItem>
        <SideRule />
        <SideItem>
          <Line>
            <path d="M2 8V5a3 3 0 0 1 3-3h11a2 2 0 0 1 2 2v3.5" />
            <path d="M2 6v15a3 3 0 0 0 3 3h16a3 3 0 0 0 3-3V10a2.5 2.5 0 0 0-2.5-2.5H2" />
            <circle cx="18.5" cy="15.5" r=".7" />
          </Line>
        </SideItem>
        <SideItem>
          <Line>
            <path d="M2 9h22v12a3.5 3.5 0 0 1-3.5 3.5h-15A3.5 3.5 0 0 1 2 21z" />
            <path d="M8 9V7a5 5 0 0 1 10 0v2" />
          </Line>
        </SideItem>
      </Sidebar>

      <Main>
        <Header>
          <Title>
            Analyze and plan with <Gradient>Tixstock Event Centre</Gradient>
          </Title>
          <ChatBubble>
            <svg width="24" height="27" viewBox="0 0 24 27">
              <path d="M3 0h18a3 3 0 0 1 3 3v24l-6-3H3a3 3 0 0 1-3-3V3a3 3 0 0 1 3-3z" fill="#fff" />
              <path d="M6 15q6 5 12 0" stroke={GREEN} strokeWidth="2" fill="none" strokeLinecap="round" />
            </svg>
            <ChatBadge>2</ChatBadge>
          </ChatBubble>
          <ZoomLabel>Zoom</ZoomLabel>
          <ZoomBox>
            100%
            <ZoomCaret>▼</ZoomCaret>
            <ZoomSign />
            <ZoomSign data-plus="" />
          </ZoomBox>
        </Header>

        <Nav>
          <NavChips>
            <HomeButton>
              <svg width="20" height="22" viewBox="0 0 20 22">
                <path d="M10 1l9 8v12h-6v-7H7v7H1V9z" fill="#fff" stroke="#fff" strokeLinejoin="round" />
              </svg>
            </HomeButton>
            <NavChip>
              <ChipIcon>
                <RiMegaphoneFill size={22} />
              </ChipIcon>
              Promoted events
            </NavChip>
            <NavChip>
              <ChipIcon>
                <RiAlarmFill size={24} />
              </ChipIcon>
              On-sale events
            </NavChip>
            <NavChip>
              <ChipIcon>
                <FaFireFlameSimple size={22} />
              </ChipIcon>
              Hot events
            </NavChip>
            <NavChip>
              <ChipIcon>
                <FaUser size={19} />
              </ChipIcon>
              My events
            </NavChip>
            <NavChip>
              <ChipIcon>
                <Logo size={26} color={PURPLE} />
              </ChipIcon>
              Insights
            </NavChip>
          </NavChips>
          <ToolPill>
            <SlidersVertical size={20} strokeWidth={2.2} />
            <Search size={20} strokeWidth={2.4} />
            <Cal size={20} />
            <FaUser size={18} />
          </ToolPill>
          <Collapse>
            <ChevronUp size={30} strokeWidth={1.6} />
          </Collapse>
        </Nav>

        <Body>
          <Content>
            <Heading>
              <HeadIcon>
                <RiMegaphoneFill size={23} />
              </HeadIcon>
              Promoted events
            </Heading>
            <CardRow>
              {promoted.map((c) => (
                <Promo key={c.title}>
                  <PromoPhoto>
                    <Photo scene={c.scene} />
                  </PromoPhoto>
                  <StarBox>
                    <Star size={18} strokeWidth={1.7} />
                  </StarBox>
                  <PromoInfo>
                    <CardTitle $light>{c.title}</CardTitle>
                    <MetaLine $light>
                      <Cal />
                      {c.date}
                    </MetaLine>
                    <MetaLine $light>
                      <Pin />
                      {c.place}
                    </MetaLine>
                  </PromoInfo>
                  <PromoBar>
                    <Metric $tone="hot">
                      <Flame />
                      Hot
                    </Metric>
                    <Metric $tone="up">
                      <Dollar />
                      {c.pct}
                    </Metric>
                    <Metric>
                      <Cal />
                      {c.days}
                    </Metric>
                  </PromoBar>
                </Promo>
              ))}
            </CardRow>

            <Heading>
              <HeadIcon>
                <svg width="21" height="18" viewBox="0 0 21 18">
                  <rect width="21" height="18" rx="2" fill="#3d3d3d" />
                  <path d="M5 6.5h11M5 11.5h11" stroke="#fff" strokeWidth="2" />
                </svg>
              </HeadIcon>
              My listed events
            </Heading>
            <CardRow>
              {listed.map((c) => (
                <Listed key={c.scene + c.place}>
                  <ListedPhoto>
                    <Photo scene={c.scene} />
                    <StarBox $flush $size={31}>
                      <Star size={18} strokeWidth={1.6} />
                    </StarBox>
                  </ListedPhoto>
                  <ListedInfo>
                    <CardTitle>{c.title}</CardTitle>
                    <MetaLine>
                      <Cal />
                      {c.date}
                    </MetaLine>
                    <MetaLine>
                      <Pin />
                      {c.place}
                    </MetaLine>
                  </ListedInfo>
                  <ListedBar>
                    {c.first === "hot" ? (
                      <>
                        <Metric $tone="hot">
                          <Flame />
                          Hot
                        </Metric>
                        <Metric>
                          <Ticket />6 listed
                        </Metric>
                        <Metric $tone="up">
                          <Dollar />
                          +0.00%
                        </Metric>
                      </>
                    ) : (
                      <>
                        <Metric>
                          <Ticket />6 listed
                        </Metric>
                        <Metric $tone="up">
                          <Dollar />
                          +0.00%
                        </Metric>
                        <Metric>
                          <Cal />
                          {c.days}
                        </Metric>
                      </>
                    )}
                  </ListedBar>
                </Listed>
              ))}
            </CardRow>

            <Columns>
              <HotColumn>
                <ColumnHead>
                  <Heading>
                    <HeadIcon>
                      <FaFireFlameSimple size={24} />
                    </HeadIcon>
                    Hot events
                  </Heading>
                  <ViewAll>View all</ViewAll>
                </ColumnHead>
                <ListCard>
                  {hot.map((r) => (
                    <Row key={r.title}>
                      <Thumb>
                        <Photo scene={r.scene} />
                        <StarBox $flush $size={32}>
                          <Star size={18} strokeWidth={1.6} />
                        </StarBox>
                      </Thumb>
                      <RowInfo>
                        <CardTitle>{r.title}</CardTitle>
                        <RowLower>
                          <div>
                            <MetaLine>
                              <Cal />
                              {r.date}
                            </MetaLine>
                            <MetaLine>
                              <Pin />
                              {r.place}
                            </MetaLine>
                          </div>
                          <StatBox>
                            <Metric $tone="up">
                              <Dollar />
                              {r.pct}
                            </Metric>
                            <Metric>
                              <Cal />
                              {r.days}
                            </Metric>
                          </StatBox>
                        </RowLower>
                      </RowInfo>
                    </Row>
                  ))}
                </ListCard>
              </HotColumn>
              <TopColumn>
                <ColumnHead>
                  <Heading>
                    <HeadIcon>
                      <svg width="19" height="19" viewBox="0 0 20 19" fill="#3d3d3d">
                        <rect x="0" y="11" width="5" height="8" rx="1" />
                        <rect x="7.5" y="6" width="5" height="13" rx="1" />
                        <rect x="15" y="0" width="5" height="19" rx="1" />
                      </svg>
                    </HeadIcon>
                    Top-selling in last 7 days
                  </Heading>
                </ColumnHead>
                <ListCard>
                  {top.map((r) => (
                    <Row key={r.title}>
                      <Thumb>
                        <Photo scene={r.scene} />
                        <StarBox $flush $size={32}>
                          <Star size={18} strokeWidth={1.6} />
                        </StarBox>
                      </Thumb>
                      <RowInfo>
                        <CardTitle>{r.title}</CardTitle>
                        <MetaLine>
                          <Cal />
                          {r.date}
                        </MetaLine>
                        <MetaLine>
                          <Pin />
                          {r.place}
                        </MetaLine>
                      </RowInfo>
                    </Row>
                  ))}
                </ListCard>
              </TopColumn>
            </Columns>
          </Content>

          <Panel>
            <PanelHead>
              <PanelTitle>World Cup 2026 - Match 1 - Group A</PanelTitle>
              <X size={26} strokeWidth={1.6} />
            </PanelHead>
            <PanelTop>
              <PanelFacts>
                <FactLine>
                  <Cal size={16} />
                  Thu, 11 Jun 2026, 14:00
                </FactLine>
                <FactLine>
                  <Pin />
                  Estadio Azteca, Ciudad de México, Mexico
                </FactLine>
                <VenueLink>Venue map</VenueLink>
                <TagRow>
                  <Tag>
                    <Ticket size={16} color="#fff" />
                    12 listed
                  </Tag>
                  <Tag>
                    <PlusSquare />
                    Add inventory
                  </Tag>
                </TagRow>
                <TagRow>
                  <Tag $kind="buy">
                    <RiShoppingBagFill size={17} />
                    Buy on TX Trade
                  </Tag>
                </TagRow>
                <TagRow>
                  <Tag $kind="hot">
                    <Flame size={16} />
                    Hot event
                  </Tag>
                  <Tag $kind="plain">
                    <Cal size={16} />
                    325 days
                  </Tag>
                </TagRow>
              </PanelFacts>
              <PanelPhoto>
                <Photo scene="aztecaWide" />
                <StarBox $flush $size={31}>
                  <Star size={18} strokeWidth={1.6} />
                </StarBox>
                <PhotoLabel>International Football</PhotoLabel>
              </PanelPhoto>
            </PanelTop>

            <Alert $tone="green">
              <RiShoppingBagFill size={17} />
              <span>
                <b>TX Trade availability</b> – Tickets are available to buy on TX Trade. <b>View inventory</b>
              </span>
            </Alert>

            <FilterBar>
              <SlidersVertical size={20} strokeWidth={2.2} />
              <Toggle>
                <ToggleOn>Listings</ToggleOn>
                <ToggleOff>Sales</ToggleOff>
              </Toggle>
              <Select $w={137}>
                Last 30 days
                <ChevronDown size={15} />
              </Select>
              <Select $w={143}>
                All categories
                <ChevronDown size={15} />
              </Select>
              <Select $w={173}>
                All section/blocks
                <ChevronDown size={15} />
              </Select>
              <Select $w={120}>Area</Select>
              <Arrows>
                <ChevronLeft size={24} strokeWidth={1.5} />
                <ChevronRight size={24} strokeWidth={1.8} />
              </Arrows>
            </FilterBar>

            <Alert>
              <Ticket size={16} color="#333" />
              <span>
                <b>My listings</b> – You have 6 listings (12 tickets) matching your filter selection. <a>View listings</a>
              </span>
            </Alert>

            <StatGrid>
              <StatCard>
                <StatValue>192</StatValue>
                <StatLabel>Total live tickets</StatLabel>
                <StatChip>60 listings</StatChip>
              </StatCard>
              <StatCard>
                <StatValue>$7,671.00</StatValue>
                <StatLabel>Average live ticket price</StatLabel>
                <StatChip $up>
                  <Dollar size={18} />
                  +6.00%
                </StatChip>
              </StatCard>
              <StatCard>
                <StatValue>$1,500.00</StatValue>
                <StatLabel>Lowest live ticket price</StatLabel>
              </StatCard>
              <StatCard>
                <StatValue>$23,488.00</StatValue>
                <StatLabel>Highest live ticket price</StatLabel>
              </StatCard>
            </StatGrid>

            <ChartCard $h={479}>
              <ChartHead>
                <ChartTitle>Average ticket price vs Number of tickets</ChartTitle>
                <Legend>
                  <LegendItem>Price</LegendItem>
                  <LegendItem $soft>Tickets</LegendItem>
                </Legend>
              </ChartHead>
              <PriceChart />
              <Tooltip>
                <TipTitle>15 Jun 2025</TipTitle>
                <TipRow $soft>Tickets: 93</TipRow>
                <TipRow>Average: $6,880</TipRow>
              </Tooltip>
            </ChartCard>

            <ChartCard $h={200}>
              <ChartHead>
                <ChartTitle>Ticket price</ChartTitle>
                <Legend>
                  <LegendItem>Average</LegendItem>
                  <LegendItem $soft>Range</LegendItem>
                </Legend>
              </ChartHead>
            </ChartCard>
          </Panel>
        </Body>
      </Main>
    </Shell>
  </>
);

export default App;
